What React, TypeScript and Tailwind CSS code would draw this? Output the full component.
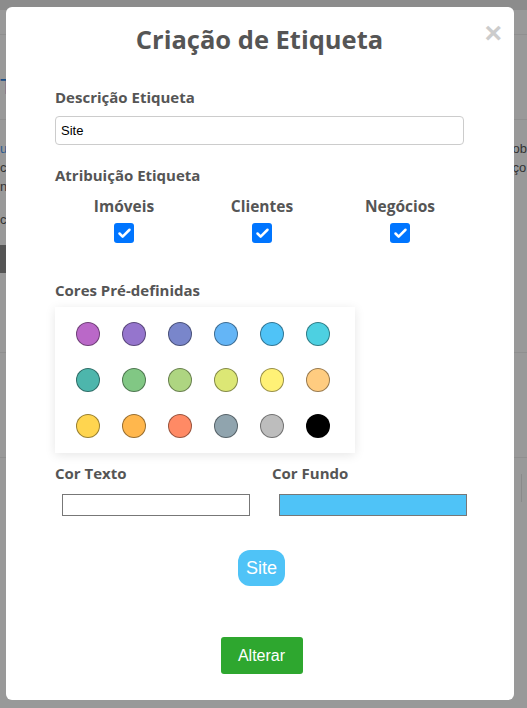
import { Check } from 'lucide-react'

const colors = [
  '#ba68c8', '#9575cd', '#7986cb', '#64b5f6', '#4fc3f7', '#4dd0e1',
  '#4db6ac', '#81c784', '#aed581', '#dce775', '#fff176', '#ffcc80',
  '#ffd54f', '#ffb74d', '#ff8a65', '#90a4ae', '#bdbdbd', '#000000',
]

function Box({ label }: { label: string }) {
  return (
    <div className="flex flex-col items-center">
      <span className="text-[15.5px] font-bold text-[#555] leading-5">{label}</span>
      <span className="mt-[7px] w-5 h-5 rounded-[3px] bg-[#0075ff] flex items-center justify-center">
        <Check size={15} strokeWidth={4} className="text-white" />
      </span>
    </div>
  )
}

export default function App() {
  return (
    <div className="relative w-[527px] h-[708px] bg-[#999] overflow-hidden font-['Open_Sans',sans-serif]">
      {/* page behind the overlay */}
      <div className="flex flex-col text-[13px] leading-[19px] text-[#333] font-['Liberation_Sans',sans-serif]">
        <div className="h-[10px] bg-[#8c8c8c]" />
        <div className="h-[25px] border-b border-[#8f8f8f]" />
        <div className="h-[85px] border-b border-[#8f8f8f] pt-[41px] text-[22px] leading-none text-[#1a4f86]">T</div>
        <div className="flex justify-between pt-[19px]">
          <div>
            <div className="text-[#2b5c8f]">u</div>
            <div>c</div>
            <div>n</div>
            <div className="mt-[14px]">c</div>
            <div className="mt-[16px] w-[8px] h-[28px] bg-[#555]" />
          </div>
          <div>
            <div>ob</div>
            <div>ço</div>
          </div>
        </div>
        <div className="mt-[79px] h-px bg-[#8f8f8f]" />
        <div className="mt-[104px] h-px bg-[#8f8f8f]" />
        <div className="mt-[16px] self-end w-[6px] h-[28px] border-l border-[#8a8a8a]" />
      </div>

      {/* modal */}
      <div className="absolute left-[6px] top-[7px] w-[508px] h-[693px] bg-white rounded-[6px] pl-[49px] pr-[50px] flex flex-col">
        <button className="absolute right-[12px] top-[11px] text-[30px] leading-none font-bold text-[#ccc] font-['Liberation_Sans',sans-serif]">
          ×
        </button>
        <h1 className="pt-[14px] text-center text-[25.5px] leading-[36px] font-bold text-[#555]">Criação de Etiqueta</h1>

        <div className="mt-[30px] text-[15px] leading-5 font-bold text-[#555]">Descrição Etiqueta</div>
        <div className="mt-[9px] h-[29px] border border-[#ccc] rounded-[4px] flex items-center px-[5px] text-[13px] text-black font-['Liberation_Sans',sans-serif]">
          Site
        </div>

        <div className="mt-[20px] text-[15px] leading-5 font-bold text-[#555]">Atribuição Etiqueta</div>
        <div className="mt-[11px] grid grid-cols-[138px_138px_138px]">
          <Box label="Imóveis" />
          <Box label="Clientes" />
          <Box label="Negócios" />
        </div>

        <div className="mt-[37px] text-[15px] leading-5 font-bold text-[#555]">Cores Pré-definidas</div>
        <div className="mt-[7px] w-[300px] bg-white shadow-[0_2px_10px_rgba(0,0,0,0.10)] flex flex-wrap gap-[22px] pl-[21px] py-[15px]">
          {colors.map((c) => (
            <span
              key={c}
              className="w-6 h-6 rounded-full border border-black/40"
              style={{ backgroundColor: c }}
            />
          ))}
        </div>

        <div className="mt-[10px] grid grid-cols-[217px_1fr]">
          <div>
            <div className="text-[15px] leading-5 font-bold text-[#555]">Cor Texto</div>
            <div className="mt-[11px] ml-[7px] w-[188px] h-[22px] border border-[#777] bg-white" />
          </div>
          <div>
            <div className="text-[15px] leading-5 font-bold text-[#555]">Cor Fundo</div>
            <div className="mt-[11px] ml-[7px] w-[188px] h-[22px] border border-[#777] bg-[#4fc3f7]" />
          </div>
        </div>

        <div className="mt-[34px] flex justify-center pl-[4px]">
          <span className="h-[36px] px-[8px] rounded-[12px] bg-[#4fc3f7] text-white text-[18px] flex items-center font-['Liberation_Sans',sans-serif]">
            Site
          </span>
        </div>

        <div className="mt-[51px] flex justify-center pl-[4px]">
          <button className="w-[82px] h-[37px] rounded-[3px] bg-[#2ea72f] text-white text-[16px] font-['Liberation_Sans',sans-serif]">
            Alterar
          </button>
        </div>
      </div>
    </div>
  )
}
